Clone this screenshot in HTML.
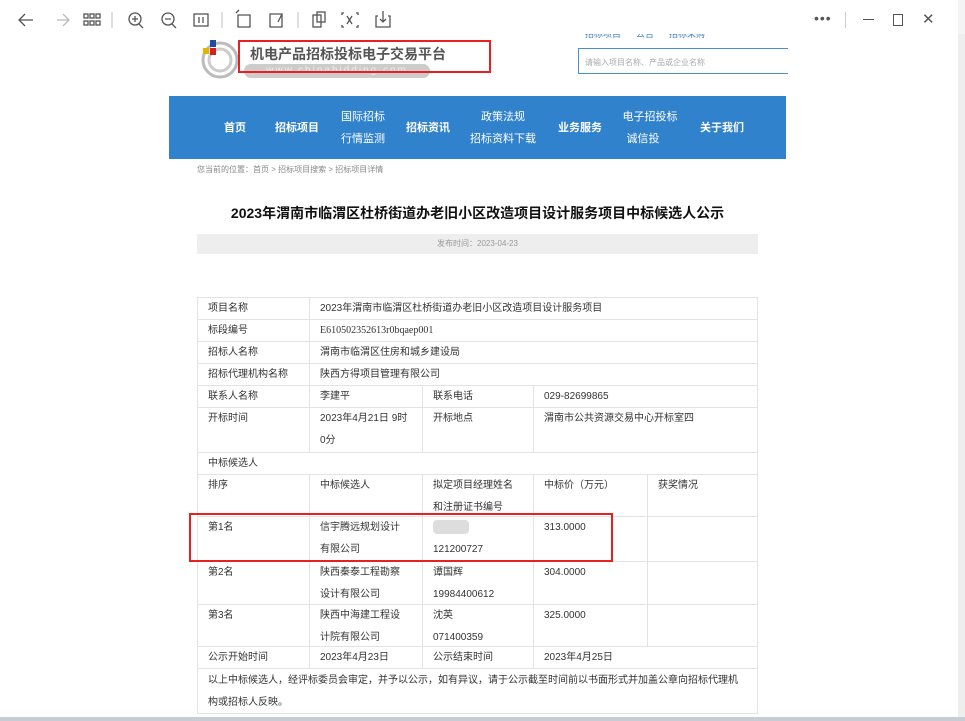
<!DOCTYPE html><html><head><meta charset="utf-8"><style>
body{margin:0;width:965px;height:721px;overflow:hidden;background:#fff;font-family:"Liberation Sans","Noto Sans CJK SC",sans-serif;position:relative}
.a{position:absolute}
.c{position:absolute;box-sizing:border-box;border:1px solid #e3e3e3;font-size:10px;color:#333;padding:0 0 0 10px;line-height:22px;white-space:nowrap}
.n{color:#fff;font-size:11px;font-weight:bold;text-align:center;line-height:22px}
</style></head><body>
<div class="a" style="left:585px;top:27px;font-size:9px;color:#3a7cc0">招标项目 &nbsp;&nbsp;&nbsp;&nbsp; 公告 &nbsp;&nbsp;&nbsp;&nbsp; 招标采购</div>
<div class="a" style="left:0;top:0;width:958px;height:34px;background:#fff"></div>
<svg class="a" style="left:0;top:0" width="420" height="34" fill="none" stroke="#555" stroke-width="1.3">
<path d="M33 20h-13M25 14l-6 6 6 6"/><path d="M57 20h12M63 14l6 6-6 6" stroke="#bbb"/>
<g><rect x="84" y="14" width="4" height="4"/><rect x="90" y="14" width="4" height="4"/><rect x="96" y="14" width="4" height="4"/><rect x="84" y="21" width="4" height="4"/><rect x="90" y="21" width="4" height="4"/><rect x="96" y="21" width="4" height="4"/></g>
<path d="M112 12v16" stroke="#ccc"/>
<circle cx="135" cy="19" r="6"/><path d="M139 24l4 4M132 19h6M135 16v6"/>
<circle cx="168" cy="19" r="6"/><path d="M172 24l4 4M165 19h6"/>
<rect x="194" y="14" width="14" height="12"/><path d="M199 17v6M203 17v6"/>
<path d="M222 12v16" stroke="#ccc"/>
<path d="M238 15h12v12h-12zM236 13l3-3"/>
<path d="M270 14h12v13h-12zM278 22l4-8"/>
<path d="M298 12v16" stroke="#ccc"/>
<rect x="313" y="15" width="8" height="12"/><rect x="317" y="12" width="8" height="10"/>
<path d="M344 13h-2v2M356 13h2v2M344 27h-2v-2M356 27h2v-2M347 16l5 8M352 16l-5 8"/>
<path d="M378 16h-2v11h14v-11h-2M383 11v11M380 19l3 3 3-3"/>
</svg>
<div class="a" style="left:814px;top:10px;font-size:14px;color:#555;letter-spacing:1px">•••</div>
<div class="a" style="left:845px;top:12px;width:1px;height:16px;background:#ccc"></div>
<div class="a" style="left:863px;top:19px;width:11px;height:1px;background:#555"></div>
<div class="a" style="left:893px;top:14px;width:8px;height:10px;border:1.3px solid #555"></div>
<div class="a" style="left:922px;top:10px;font-size:15px;color:#555">✕</div>
<div class="a" style="left:958px;top:34px;width:7px;height:687px;background:#eee"></div>
<div class="a" style="left:958px;top:0;width:7px;height:34px;background:#f4f4f4"></div>

<svg class="a" style="left:198px;top:38px" width="40" height="42"><circle cx="22" cy="22" r="17" fill="none" stroke="#bbb" stroke-width="3"/><circle cx="22" cy="22" r="11" fill="none" stroke="#ccc" stroke-width="3"/><rect x="12" y="2" width="6" height="7" fill="#1d4fa0"/><rect x="12" y="10" width="6" height="7" fill="#d62020"/><rect x="5" y="10" width="6" height="6" fill="#e8b300"/></svg>
<div class="a" style="left:250px;top:44px;font-size:14px;font-weight:bold;color:#555">机电产品招标投标电子交易平台</div>
<div class="a" style="left:244px;top:64px;width:186px;height:14px;background:#ccc;border-radius:7px;color:#eee;font-size:10px;text-align:center;line-height:14px;letter-spacing:2px">www.chinabidding.com</div>
<div class="a" style="left:238px;top:40px;width:253px;height:33px;border:2px solid #e82020;box-sizing:border-box"></div>
<div class="a" style="left:578px;top:48px;width:210px;height:26px;border:1px solid #4a90d0;border-right:none;box-sizing:border-box;font-size:8px;color:#aaa;padding:8px 0 0 6px">请输入项目名称、产品或企业名称</div>

<div class="a" style="left:169px;top:96px;width:617px;height:63px;background:#3182cc"></div>
<div class="a n" style="left:215px;top:117px;width:40px">首页</div>
<div class="a n" style="left:267px;top:117px;width:60px">招标项目</div>
<div class="a n" style="left:333px;top:106px;width:60px;font-weight:normal">国际招标<br>行情监测</div>
<div class="a n" style="left:398px;top:117px;width:60px">招标资讯</div>
<div class="a n" style="left:463px;top:106px;width:80px;font-weight:normal">政策法规<br>招标资料下载</div>
<div class="a n" style="left:550px;top:117px;width:60px">业务服务</div>
<div class="a n" style="left:615px;top:106px;width:70px;font-weight:normal">电子招投标<br><span style="margin-right:14px">诚信投</span></div>
<div class="a n" style="left:692px;top:117px;width:60px">关于我们</div>

<div class="a" style="left:197px;top:164px;font-size:8px;color:#888">您当前的位置：首页 &gt; 招标项目搜索 &gt; 招标项目详情</div>
<div class="a" style="left:169px;top:203px;width:617px;text-align:center;font-size:14px;font-weight:bold;color:#111">2023年渭南市临渭区杜桥街道办老旧小区改造项目设计服务项目中标候选人公示</div>
<div class="a" style="left:197px;top:234px;width:561px;height:20px;background:#eee;font-size:8px;color:#999;text-align:center;line-height:20px">发布时间：2023-04-23</div>

<div class="c" style="left:197px;top:297px;width:113px;height:23px">项目名称</div>
<div class="c" style="left:309px;top:297px;width:449px;height:23px">2023年渭南市临渭区杜桥街道办老旧小区改造项目设计服务项目</div>
<div class="c" style="left:197px;top:319px;width:113px;height:23px">标段编号</div>
<div class="c" style="left:309px;top:319px;width:449px;height:23px;font-family:'Liberation Serif',serif">E610502352613r0bqaep001</div>
<div class="c" style="left:197px;top:341px;width:113px;height:23px">招标人名称</div>
<div class="c" style="left:309px;top:341px;width:449px;height:23px">渭南市临渭区住房和城乡建设局</div>
<div class="c" style="left:197px;top:363px;width:113px;height:23px">招标代理机构名称</div>
<div class="c" style="left:309px;top:363px;width:449px;height:23px">陕西方得项目管理有限公司</div>
<div class="c" style="left:197px;top:385px;width:113px;height:23px">联系人名称</div>
<div class="c" style="left:309px;top:385px;width:114px;height:23px">李建平</div>
<div class="c" style="left:422px;top:385px;width:112px;height:23px">联系电话</div>
<div class="c" style="left:533px;top:385px;width:225px;height:23px">029-82699865</div>
<div class="c" style="left:197px;top:407px;width:113px;height:46px">开标时间</div>
<div class="c" style="left:309px;top:407px;width:114px;height:46px">2023年4月21日 9时<br>0分</div>
<div class="c" style="left:422px;top:407px;width:112px;height:46px">开标地点</div>
<div class="c" style="left:533px;top:407px;width:225px;height:46px">渭南市公共资源交易中心开标室四</div>
<div class="c" style="left:197px;top:452px;width:561px;height:23px">中标候选人</div>
<div class="c" style="left:197px;top:474px;width:113px;height:43px">排序</div>
<div class="c" style="left:309px;top:474px;width:114px;height:43px">中标候选人</div>
<div class="c" style="left:422px;top:474px;width:112px;height:43px">拟定项目经理姓名<br>和注册证书编号</div>
<div class="c" style="left:533px;top:474px;width:115px;height:43px">中标价（万元）</div>
<div class="c" style="left:647px;top:474px;width:111px;height:43px">获奖情况</div>
<div class="c" style="left:197px;top:516px;width:113px;height:46px">第1名</div>
<div class="c" style="left:309px;top:516px;width:114px;height:46px">信宇腾远规划设计<br>有限公司</div>
<div class="c" style="left:422px;top:516px;width:112px;height:46px"><span style="display:inline-block;width:36px;height:14px;background:#ddd;vertical-align:middle;border-radius:4px"></span><br>121200727</div>
<div class="c" style="left:533px;top:516px;width:115px;height:46px">313.0000</div>
<div class="c" style="left:647px;top:516px;width:111px;height:46px"></div>
<div class="c" style="left:197px;top:561px;width:113px;height:44px">第2名</div>
<div class="c" style="left:309px;top:561px;width:114px;height:44px">陕西秦泰工程勘察<br>设计有限公司</div>
<div class="c" style="left:422px;top:561px;width:112px;height:44px">谭国辉<br>19984400612</div>
<div class="c" style="left:533px;top:561px;width:115px;height:44px">304.0000</div>
<div class="c" style="left:647px;top:561px;width:111px;height:44px"></div>
<div class="c" style="left:197px;top:604px;width:113px;height:43px">第3名</div>
<div class="c" style="left:309px;top:604px;width:114px;height:43px">陕西中海建工程设<br>计院有限公司</div>
<div class="c" style="left:422px;top:604px;width:112px;height:43px">沈英<br>071400359</div>
<div class="c" style="left:533px;top:604px;width:115px;height:43px">325.0000</div>
<div class="c" style="left:647px;top:604px;width:111px;height:43px"></div>
<div class="c" style="left:197px;top:646px;width:113px;height:23px">公示开始时间</div>
<div class="c" style="left:309px;top:646px;width:114px;height:23px">2023年4月23日</div>
<div class="c" style="left:422px;top:646px;width:112px;height:23px">公示结束时间</div>
<div class="c" style="left:533px;top:646px;width:225px;height:23px">2023年4月25日</div>
<div class="c" style="left:197px;top:668px;width:561px;height:46px;padding-top:1px">以上中标候选人，经评标委员会审定，并予以公示，如有异议，请于公示截至时间前以书面形式并加盖公章向招标代理机<br>构或招标人反映。</div>
<div class="a" style="left:189px;top:513px;width:424px;height:49px;border:2px solid #e82020;box-sizing:border-box"></div>
<div class="a" style="left:0;top:717px;width:965px;height:4px;background:#c8ccd4"></div>
</body></html>
